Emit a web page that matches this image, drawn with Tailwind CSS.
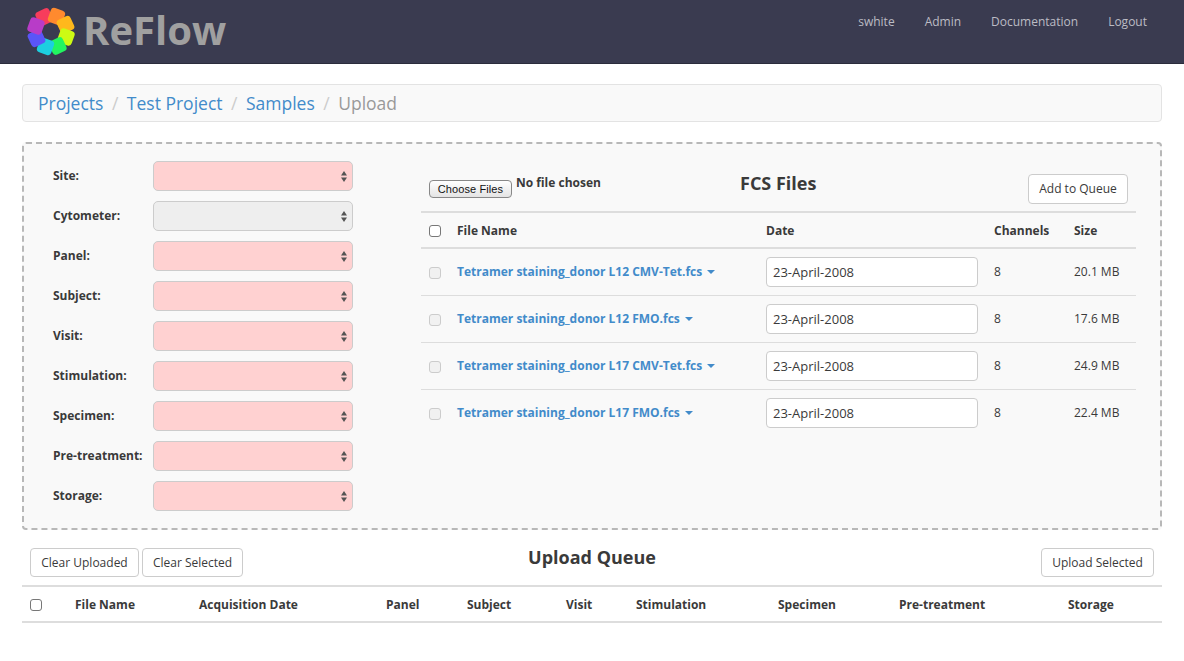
<!DOCTYPE html>
<html lang="en">
  <head>
    <meta charset="UTF-8" />
    <title>ReFlow - Upload</title>
    <script src="https://cdn.jsdelivr.net/npm/@tailwindcss/browser@4"></script>
  </head>
  <body class="bg-white font-['Open_Sans',sans-serif] text-[#3a3a3a] text-[13px] overflow-hidden">
    <!-- header -->
    <header class="h-[64px] bg-[#3a3b50] border-b border-[#2b2c3c] flex items-center justify-between pl-[26px] pr-[37px]">
      <div class="flex items-center">
        <svg width="50" height="50" viewBox="0 0 50 50" class="shrink-0">
          <g transform="translate(25 24.5)">
            <rect x="-7.5" y="-23.5" width="15" height="15" rx="3.5" fill="#f73c5c" transform="rotate(-25)" />
            <rect x="-7.5" y="-23.5" width="15" height="15" rx="3.5" fill="#ff8a2e" transform="rotate(20)" />
            <rect x="-7.5" y="-23.5" width="15" height="15" rx="3.5" fill="#ffb81c" transform="rotate(65)" />
            <rect x="-7.5" y="-23.5" width="15" height="15" rx="3.5" fill="#cdfa14" transform="rotate(110)" />
            <rect x="-7.5" y="-23.5" width="15" height="15" rx="3.5" fill="#22f560" transform="rotate(155)" />
            <rect x="-7.5" y="-23.5" width="15" height="15" rx="3.5" fill="#1ccfe0" transform="rotate(200)" />
            <rect x="-7.5" y="-23.5" width="15" height="15" rx="3.5" fill="#5a55f8" transform="rotate(245)" />
            <rect x="-7.5" y="-23.5" width="15" height="15" rx="3.5" fill="#b83cc8" transform="rotate(290)" />
          </g>
        </svg>
        <span class="ml-[7px] -mt-[4px] text-[40px] leading-none font-bold text-[#a0a0a0]">ReFlow</span>
      </div>
      <nav class="self-start pt-[13px] flex gap-[30px] text-[#bcbcc4] text-[12px]">
        <a>swhite</a>
        <a>Admin</a>
        <a>Documentation</a>
        <a>Logout</a>
      </nav>
    </header>

    <main class="px-[22px]">
      <!-- breadcrumb -->
      <div class="mt-[20px] h-[38px] bg-[#f9f9f9] border border-[#e3e3e3] rounded flex items-center px-[15px] text-[17.5px] text-[#999]">
        <a class="text-[#428bca]">Projects</a>
        <span class="px-[8.5px] text-[#ccc]">/</span>
        <a class="text-[#428bca]">Test Project</a>
        <span class="px-[8.5px] text-[#ccc]">/</span>
        <a class="text-[#428bca]">Samples</a>
        <span class="px-[8.5px] text-[#ccc]">/</span>
        <span>Upload</span>
      </div>

      <!-- upload form -->
      <section class="mt-[20px] h-[388px] bg-[#f9f9f9] border-2 border-dashed border-[#b8b8b8] rounded flex">
        <div class="w-[397px] shrink-0 pl-[29px] pt-[17px] flex flex-col gap-[10px] text-[12px] font-bold">
          <div class="flex items-center h-[30px]"><label class="w-[100px]">Site:</label><div class="relative w-[200px]"><select class="appearance-none block w-full h-[30px] bg-[#ffd1d1] border border-[#ccc] rounded-[5px]"></select><svg width="6" height="11" viewBox="0 0 6 11" class="absolute right-[6px] top-[10px]"><path d="M3 0L6 4.5H0zM0 6.5h6L3 11z" fill="#555" /></svg></div></div>
          <div class="flex items-center h-[30px]"><label class="w-[100px]">Cytometer:</label><div class="relative w-[200px]"><select class="appearance-none block w-full h-[30px] bg-[#eee] border border-[#ccc] rounded-[5px]"></select><svg width="6" height="11" viewBox="0 0 6 11" class="absolute right-[6px] top-[10px]"><path d="M3 0L6 4.5H0zM0 6.5h6L3 11z" fill="#555" /></svg></div></div>
          <div class="flex items-center h-[30px]"><label class="w-[100px]">Panel:</label><div class="relative w-[200px]"><select class="appearance-none block w-full h-[30px] bg-[#ffd1d1] border border-[#ccc] rounded-[5px]"></select><svg width="6" height="11" viewBox="0 0 6 11" class="absolute right-[6px] top-[10px]"><path d="M3 0L6 4.5H0zM0 6.5h6L3 11z" fill="#555" /></svg></div></div>
          <div class="flex items-center h-[30px]"><label class="w-[100px]">Subject:</label><div class="relative w-[200px]"><select class="appearance-none block w-full h-[30px] bg-[#ffd1d1] border border-[#ccc] rounded-[5px]"></select><svg width="6" height="11" viewBox="0 0 6 11" class="absolute right-[6px] top-[10px]"><path d="M3 0L6 4.5H0zM0 6.5h6L3 11z" fill="#555" /></svg></div></div>
          <div class="flex items-center h-[30px]"><label class="w-[100px]">Visit:</label><div class="relative w-[200px]"><select class="appearance-none block w-full h-[30px] bg-[#ffd1d1] border border-[#ccc] rounded-[5px]"></select><svg width="6" height="11" viewBox="0 0 6 11" class="absolute right-[6px] top-[10px]"><path d="M3 0L6 4.5H0zM0 6.5h6L3 11z" fill="#555" /></svg></div></div>
          <div class="flex items-center h-[30px]"><label class="w-[100px]">Stimulation:</label><div class="relative w-[200px]"><select class="appearance-none block w-full h-[30px] bg-[#ffd1d1] border border-[#ccc] rounded-[5px]"></select><svg width="6" height="11" viewBox="0 0 6 11" class="absolute right-[6px] top-[10px]"><path d="M3 0L6 4.5H0zM0 6.5h6L3 11z" fill="#555" /></svg></div></div>
          <div class="flex items-center h-[30px]"><label class="w-[100px]">Specimen:</label><div class="relative w-[200px]"><select class="appearance-none block w-full h-[30px] bg-[#ffd1d1] border border-[#ccc] rounded-[5px]"></select><svg width="6" height="11" viewBox="0 0 6 11" class="absolute right-[6px] top-[10px]"><path d="M3 0L6 4.5H0zM0 6.5h6L3 11z" fill="#555" /></svg></div></div>
          <div class="flex items-center h-[30px]"><label class="w-[100px]">Pre-treatment:</label><div class="relative w-[200px]"><select class="appearance-none block w-full h-[30px] bg-[#ffd1d1] border border-[#ccc] rounded-[5px]"></select><svg width="6" height="11" viewBox="0 0 6 11" class="absolute right-[6px] top-[10px]"><path d="M3 0L6 4.5H0zM0 6.5h6L3 11z" fill="#555" /></svg></div></div>
          <div class="flex items-center h-[30px]"><label class="w-[100px]">Storage:</label><div class="relative w-[200px]"><select class="appearance-none block w-full h-[30px] bg-[#ffd1d1] border border-[#ccc] rounded-[5px]"></select><svg width="6" height="11" viewBox="0 0 6 11" class="absolute right-[6px] top-[10px]"><path d="M3 0L6 4.5H0zM0 6.5h6L3 11z" fill="#555" /></svg></div></div>
        </div>

        <div class="w-[715px] shrink-0">
          <div class="relative h-[69px] border-b-2 border-[#ddd]">
            <div class="absolute left-[8px] top-[36px] flex items-start">
              <button class="h-[18px] w-[83px] bg-gradient-to-b from-white to-[#e4e4e4] border border-[#888] rounded-[4px] text-[11px] leading-none font-['Liberation_Sans',sans-serif] tracking-[0.1px] text-[#111]">Choose Files</button>
              <span class="ml-[4px] -mt-[6px] text-[12px] font-bold">No file chosen</span>
            </div>
            <h2 class="absolute left-[319px] top-[26px] text-[18px] leading-[26px] font-bold">FCS Files</h2>
            <button class="absolute right-[8px] top-[30px] h-[30px] w-[100px] bg-white border border-[#ccc] rounded text-[12px]">Add to Queue</button>
          </div>
          <div class="grid grid-cols-[36px_309px_228px_80px_62px] items-center h-[36px] pt-[1px] border-b-2 border-[#ddd] text-[12px] font-bold">
            <div class="pl-[8px] flex"><input type="checkbox" class="appearance-none block size-[12px] bg-white border border-[#777] rounded-[3px]" /></div>
            <div>File Name</div><div>Date</div><div>Channels</div><div>Size</div>
          </div>
          <div class="grid grid-cols-[36px_309px_228px_80px_62px] items-center h-[47px] border-b border-[#ddd] text-[12px]">
            <div class="pl-[8px] pt-[2px] flex"><input type="checkbox" class="appearance-none block size-[12px] bg-[#f1f1f1] border border-[#ccc] rounded-[3px]" /></div>
            <a class="font-bold text-[#428bca] flex items-center">Tetramer staining_donor L12 CMV-Tet.fcs<span class="ml-[5px] border-x-[4px] border-x-transparent border-t-[4px] border-t-[#428bca]"></span></a>
            <input value="23-April-2008" class="block w-[212px] h-[30px] bg-white border border-[#ccc] rounded-[4px] px-[6px] text-[13px]" />
            <div>8</div><div>20.1 MB</div>
          </div>
          <div class="grid grid-cols-[36px_309px_228px_80px_62px] items-center h-[47px] border-b border-[#ddd] text-[12px]">
            <div class="pl-[8px] pt-[2px] flex"><input type="checkbox" class="appearance-none block size-[12px] bg-[#f1f1f1] border border-[#ccc] rounded-[3px]" /></div>
            <a class="font-bold text-[#428bca] flex items-center">Tetramer staining_donor L12 FMO.fcs<span class="ml-[5px] border-x-[4px] border-x-transparent border-t-[4px] border-t-[#428bca]"></span></a>
            <input value="23-April-2008" class="block w-[212px] h-[30px] bg-white border border-[#ccc] rounded-[4px] px-[6px] text-[13px]" />
            <div>8</div><div>17.6 MB</div>
          </div>
          <div class="grid grid-cols-[36px_309px_228px_80px_62px] items-center h-[47px] border-b border-[#ddd] text-[12px]">
            <div class="pl-[8px] pt-[2px] flex"><input type="checkbox" class="appearance-none block size-[12px] bg-[#f1f1f1] border border-[#ccc] rounded-[3px]" /></div>
            <a class="font-bold text-[#428bca] flex items-center">Tetramer staining_donor L17 CMV-Tet.fcs<span class="ml-[5px] border-x-[4px] border-x-transparent border-t-[4px] border-t-[#428bca]"></span></a>
            <input value="23-April-2008" class="block w-[212px] h-[30px] bg-white border border-[#ccc] rounded-[4px] px-[6px] text-[13px]" />
            <div>8</div><div>24.9 MB</div>
          </div>
          <div class="grid grid-cols-[36px_309px_228px_80px_62px] items-center h-[46px] text-[12px]">
            <div class="pl-[8px] pt-[2px] flex"><input type="checkbox" class="appearance-none block size-[12px] bg-[#f1f1f1] border border-[#ccc] rounded-[3px]" /></div>
            <a class="font-bold text-[#428bca] flex items-center">Tetramer staining_donor L17 FMO.fcs<span class="ml-[5px] border-x-[4px] border-x-transparent border-t-[4px] border-t-[#428bca]"></span></a>
            <input value="23-April-2008" class="block w-[212px] h-[30px] bg-white border border-[#ccc] rounded-[4px] px-[6px] text-[13px]" />
            <div>8</div><div>22.4 MB</div>
          </div>
        </div>
      </section>

      <!-- upload queue -->
      <section class="mt-[18px]">
        <div class="relative h-[37px] px-[8px] flex justify-between">
          <div class="flex gap-[3px]">
            <button class="h-[29px] w-[109px] bg-white border border-[#ccc] rounded text-[12px]">Clear Uploaded</button>
            <button class="h-[29px] w-[101px] bg-white border border-[#ccc] rounded text-[12px]">Clear Selected</button>
          </div>
          <h2 class="absolute left-0 right-0 -top-[4px] text-center text-[18px] leading-[26px] font-bold">Upload Queue</h2>
          <button class="h-[29px] w-[113px] bg-white border border-[#ccc] rounded text-[12px]">Upload Selected</button>
        </div>
        <div class="grid grid-cols-[53px_124px_187px_81px_99px_70px_142px_121px_169px_94px] items-center h-[38px] pt-[1px] border-y-2 border-[#ddd] text-[12px] font-bold">
          <div class="pl-[8px] flex"><input type="checkbox" class="appearance-none block size-[12px] bg-white border border-[#777] rounded-[3px]" /></div>
          <div>File Name</div><div>Acquisition Date</div><div>Panel</div><div>Subject</div><div>Visit</div><div>Stimulation</div><div>Specimen</div><div>Pre-treatment</div><div>Storage</div>
        </div>
      </section>
    </main>
  </body>
</html>
